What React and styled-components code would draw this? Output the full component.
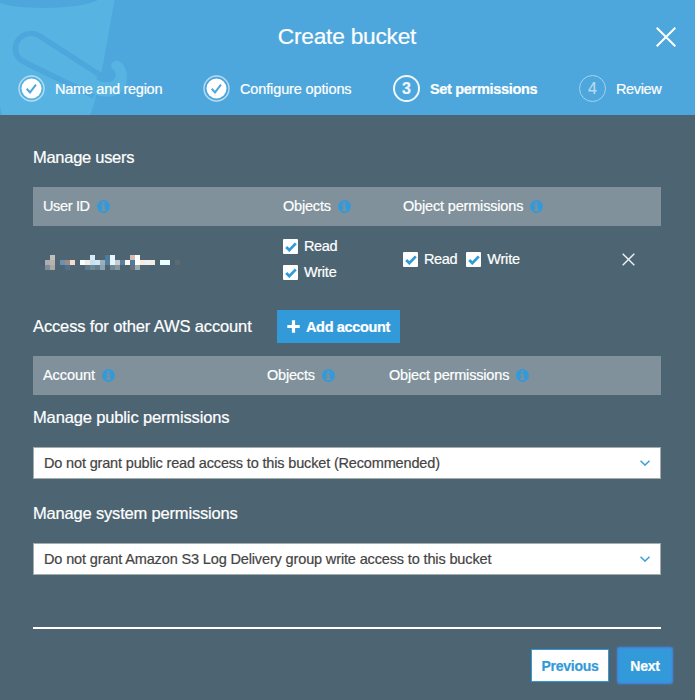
import React from "react";
import styled, { createGlobalStyle, css } from "styled-components";

const Global = createGlobalStyle`
  * { box-sizing: border-box; }
  body { margin: 0; background: #4d6572; font-family: "Liberation Sans", Arial, sans-serif; font-size: 14.5px; color: #fff; -webkit-text-stroke: 0.2px; }
  h1, h2 { margin: 0; font-weight: 400; }
  svg { flex: none; display: block; }
`;

const Dialog = styled.main`
  width: 695px; height: 700px; background: #4d6572; overflow: hidden;
  display: flex; flex-direction: column;
`;
const Header = styled.header`position: relative; height: 115px; flex: none; background: #4da7dc;`;
const Bucket = styled.svg`position: absolute; left: 0; top: 0;`;
const HeaderContent = styled.div`position: relative;`;
const TitleBar = styled.div`
  height: 75px; display: grid; grid-template-columns: 60px 1fr 60px; align-items: center; text-align: center;
`;
const Title = styled.h1`font-size: 22.7px; line-height: 28px; letter-spacing: -0.23px; margin: -4px 1px 0 0;`;
const IconButton = styled.button`
  border: 0; background: none; padding: 0 0 1px 2px; color: #fff; display: flex; align-items: center; justify-content: center;
`;
const Steps = styled.ol`
  list-style: none; margin: 0; padding: 0 0 0 18px; display: grid;
  grid-template-columns: 185px 190px 186px 1fr; height: 28px;
`;
const Step = styled.li`display: flex; align-items: center; gap: 9px; font-weight: ${p => (p.$current ? 700 : 400)};`;
const Label = styled.span`
  white-space: nowrap; letter-spacing: ${p => p.$ls || 0}px;
`;
const Body = styled.section`padding: 0 34px 0 33px; display: flex; flex-direction: column;`;
const Heading = styled.h2`
  font-size: 16.5px; line-height: 20px; letter-spacing: ${p => p.$ls || 0}px; white-space: nowrap;
  margin-top: ${p => p.$top || 0}px;
`;
const columns = css`display: grid; align-items: center; padding-left: 10px; grid-template-columns: ${p => p.$cols};`;
const TableHead = styled.div`
  ${columns} height: 39px; background: #80919b; margin-top: ${p => p.$top}px;
`;
const HeadCell = styled.div`
  display: flex; align-items: center; gap: 7px;
  ${Label} { padding-bottom: 2px; }
`;
const UserRow = styled.div`${columns} height: 84px; padding-bottom: 17px;`;
const Checks = styled.div`display: flex; flex-direction: ${p => (p.$stack ? "column" : "row")}; gap: 9px;`;
const Check = styled.label`
  display: flex; align-items: center; gap: 6px; height: 17px;
  ${Label} { padding-bottom: 2px; }
`;
const Box = styled.span`
  width: 15px; height: 15px; background: #fff; border-radius: 1px; display: flex; align-items: center; justify-content: center;
`;
const AccountBar = styled.div`
  display: flex; align-items: center; height: 33px; gap: 25px;
  ${Heading} { width: 219px; padding-bottom: 2px; }
`;
const AddButton = styled.button`
  width: 123px; height: 33px; padding: 0 0 0 10px; border: 0; background: #329ad9; color: #fff;
  font: 700 14.5px "Liberation Sans", Arial, sans-serif; display: flex; align-items: center; gap: 6px;
`;
const Select = styled.div`
  height: 32px; margin-top: ${p => p.$top}px; padding: 0 10px; background: #fff; color: #444;
  border: 1px solid #a3adad; display: flex; align-items: center; justify-content: space-between;
`;
const Rule = styled.hr`margin: 52px 34px 0 33px; border: 0; height: 2px; background: #fff; flex: none;`;
const Actions = styled.footer`display: flex; justify-content: flex-end; gap: 10px; padding: 20px 24px 0 0;`;
const Action = styled.button`
  height: 33px; width: ${p => p.$w}px; padding: 0; border: 1px solid #329ad9; font: 700 14px "Liberation Sans", Arial, sans-serif;
  letter-spacing: -0.25px;
  background: ${p => (p.$primary ? "#329ad9" : "#fff")}; color: ${p => (p.$primary ? "#fff" : "#329ad9")};
  ${p => p.$primary && css`box-shadow: 0 0 2px 1.5px #3d8fee; border-radius: 1px;`}
`;

const DoneIcon = () => (
  <svg width="28" height="28" viewBox="0 0 28 28">
    <circle cx="13.5" cy="13.5" r="12.5" fill="none" stroke="#b8dcf1" strokeWidth="1.4" />
    <circle cx="13.5" cy="13.5" r="10" fill="#fff" />
    <path d="M8.7 13.8l3.3 3.6 6-7.7" fill="none" stroke="#4da7dc" strokeWidth="2" />
  </svg>
);
const Badge = styled.span`
  width: 27px; height: 27px; margin: 0 1px 1px 0; border-radius: 50%; display: flex; align-items: center; justify-content: center;
  border: ${p => (p.$current ? "2px solid #eef7fc" : "1.5px solid #a6d3ee")};
  color: ${p => (p.$current ? "#eef7fc" : "#b8dcf1")}; font-size: 16px; font-weight: ${p => (p.$current ? 700 : 400)};
`;
const Cross = ({ size, width, color = "#fff" }) => (
  <svg width={size} height={size} viewBox={`0 0 ${size} ${size}`}>
    <path d={`M.7 .7L${size - 0.7} ${size - 0.7}M${size - 0.7} .7L.7 ${size - 0.7}`} stroke={color} strokeWidth={width} />
  </svg>
);
const InfoIcon = () => (
  <svg width="13" height="13" viewBox="0 0 13 13">
    <circle cx="6.5" cy="6.5" r="6.5" fill="#329ad9" />
    <path d="M5.3 1.8h2.3v1.9H5.3zM4.3 4.8h3.3v4.5h1.1v1.7H4.3V9.3h1.1V6.5H4.3z" fill="#80919b" />
  </svg>
);
const CheckMark = () => (
  <svg width="12" height="10" viewBox="0 0 12 10">
    <path d="M1.2 5.1l3.1 3L10.8 1.4" fill="none" stroke="#329ad9" strokeWidth="2.8" />
  </svg>
);
const Chevron = () => (
  <svg width="10" height="6" viewBox="0 0 10 6">
    <path d="M.5 .7L5 5.1 9.5 .7" fill="none" stroke="#3c9fda" strokeWidth="1.5" />
  </svg>
);

const maskCells = [
  [2, 0, "#c4bfb4"], [10, 0, "#d3ebfa"], [13, 0, "#4a7a9c"], [14, 0, "#e6f6ff"], [18, 0, "#d5bdb4"], [19, 0, "#fff"],
  [0, 1, "#4a6074"], [1, 1, "#abaeb8"], [2, 1, "#b5b3ac"], [4, 1, "#6d8fac"], [5, 1, "#9a8c87"], [6, 1, "#f3dccb"],
  [8, 1, "#f6ffff"], [9, 1, "#f5ecdf"], [10, 1, "#c5e2f4"], [11, 1, "#d3e6f2"], [12, 1, "#9daebb"], [13, 1, "#53809e"],
  [14, 1, "#e6f6ff"], [15, 1, "#c3cbd3"], [16, 1, "#5c7f9b"], [17, 1, "#fff8ec"], [18, 1, "#4d7c9e"], [19, 1, "#fff"],
  [20, 1, "#fde8d3"], [21, 1, "#eaf0f8"], [22, 1, "#f8ecdd"], [24, 1, "#eaffff"], [25, 1, "#eaffff"], [26, 1, "#4a6373"], [27, 1, "#5b6b70"],
  [1, 2, "#7f8d95"], [2, 2, "#a9aaa5"], [4, 2, "#4a6478"], [5, 2, "#52708a"], [9, 2, "#5d7b8c"], [10, 2, "#6d8896"],
  [11, 2, "#627d8c"], [12, 2, "#8fa3ac"], [14, 2, "#6f8795"], [15, 2, "#85979f"], [18, 2, "#6b6f78"], [19, 2, "#9aabb5"], [22, 2, "#4b6273"],
];
const MaskSvg = styled.svg`margin: 6px 0 0 -3px;`;
const MaskedId = () => (
  <MaskSvg width="140" height="15" shapeRendering="crispEdges">
    {maskCells.map(([x, y, fill]) => <rect key={`${x}-${y}`} x={x * 5} y={y * 5} width="5" height="5" fill={fill} />)}
  </MaskSvg>
);

const InfoCell = ({ children, ls }) => <HeadCell><Label $ls={ls}>{children}</Label><InfoIcon /></HeadCell>;
const CheckItem = ({ children, ls }) => <Check><Box><CheckMark /></Box><Label $ls={ls}>{children}</Label></Check>;

export default function App() {
  return (
    <Dialog>
      <Global />
      <Header>
        <Bucket width="140" height="115" viewBox="0 0 140 115">
          <path d="M0 0H114.5L101 76L95 100L91 113L90 115H2L0 107Z" fill="#56b3e2" />
          <path d="M0 3C18 10 78 10 98 0H0Z" fill="#4da7dc" />
          <path d="M103 77L42 37.500C28 27 12 39 16 53C18 60 23 61 28 64L94 96" fill="none" stroke="#4da7dc" strokeWidth="5.500" />
          <path d="M96 79L102 72L114 74L110 82L104 82.500Z" fill="#4da7dc" />
          <path d="M111 65.500C112 59 121 59 124.500 67C129 76 127.500 87 120 93C113 98 103 98 90 92.500L85 84L92 78.500C101 82 109 84 113.500 80C117 76.500 116 71 113 69.500Q111 68 111 65.500Z" fill="#56b3e2" />
        </Bucket>
        <HeaderContent>
          <TitleBar>
            <span />
            <Title>Create bucket</Title>
            <IconButton aria-label="Close"><Cross size={20} width={2} /></IconButton>
          </TitleBar>
          <Steps>
            <Step><DoneIcon /><Label $ls={-0.27}>Name and region</Label></Step>
            <Step><DoneIcon /><Label $ls={-0.13}>Configure options</Label></Step>
            <Step $current><Badge $current>3</Badge><Label $ls={-0.32}>Set permissions</Label></Step>
            <Step><Badge>4</Badge><Label $ls={-0.35}>Review</Label></Step>
          </Steps>
        </HeaderContent>
      </Header>
      <Body>
        <Heading $top={32} $ls={-0.28}>Manage users</Heading>
        <TableHead $top={20} $cols="240px 120px 1fr">
          <InfoCell ls={-0.35}>User ID</InfoCell><InfoCell ls={-0.2}>Objects</InfoCell><InfoCell ls={-0.17}>Object permissions</InfoCell>
        </TableHead>
        <UserRow $cols="240px 120px 219px 1fr">
          <MaskedId />
          <Checks $stack><CheckItem ls={-0.35}>Read</CheckItem><CheckItem ls={-0.2}>Write</CheckItem></Checks>
          <Checks><CheckItem ls={-0.35}>Read</CheckItem><CheckItem ls={-0.2}>Write</CheckItem></Checks>
          <Cross size={13} width={1.4} color="#eef1f2" />
        </UserRow>
        <AccountBar>
          <Heading $ls={-0.13}>Access for other AWS account</Heading>
          <AddButton>
            <svg width="13" height="13" viewBox="0 0 13 13"><path d="M6.5 .3v12.400M.3 6.5h12.400" stroke="#fff" strokeWidth="3.200" /></svg>
            <Label $ls={-0.35}>Add account</Label>
          </AddButton>
        </AccountBar>
        <TableHead $top={13} $cols="224px 122px 1fr">
          <InfoCell ls={-0.05}>Account</InfoCell><InfoCell ls={-0.2}>Objects</InfoCell><InfoCell ls={-0.17}>Object permissions</InfoCell>
        </TableHead>
        <Heading $top={12} $ls={-0.14}>Manage public permissions</Heading>
        <Select $top={20}><Label $ls={-0.16}>Do not grant public read access to this bucket (Recommended)</Label><Chevron /></Select>
        <Heading $top={24} $ls={-0.18}>Manage system permissions</Heading>
        <Select $top={20}><Label $ls={-0.14}>Do not grant Amazon S3 Log Delivery group write access to this bucket</Label><Chevron /></Select>
      </Body>
      <Rule />
      <Actions>
        <Action $w={78}>Previous</Action>
        <Action $w={52} $primary>Next</Action>
      </Actions>
    </Dialog>
  );
}
